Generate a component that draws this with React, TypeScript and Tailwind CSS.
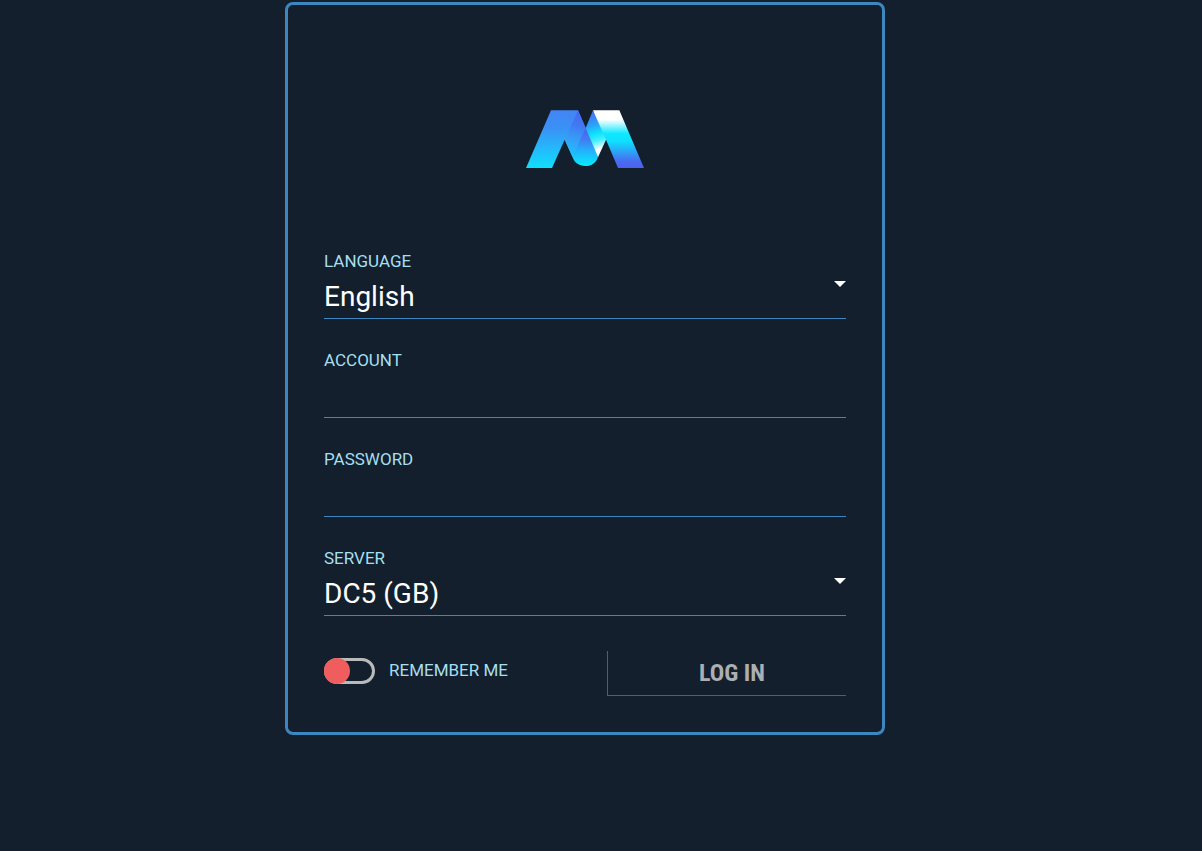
import { useState } from "react";
import type { ReactNode } from "react";

const languages = ["English", "Deutsch", "Español", "Français"];
const servers = ["DC5 (GB)", "DC1 (US)", "DC2 (DE)"];

export default function App() {
  const [language, setLanguage] = useState(languages[0]);
  const [account, setAccount] = useState("");
  const [password, setPassword] = useState("");
  const [server, setServer] = useState(servers[0]);
  const [remember, setRemember] = useState(false);

  return (
    <div className="min-h-screen bg-[#131f2c] pt-0.5 pr-8 font-['Roboto',sans-serif]">
      <form
        onSubmit={(e) => e.preventDefault()}
        className="mx-auto w-full max-w-[600px] rounded-lg border-3 border-[#3c87c0] p-9"
      >
        <div className="mb-3.5 flex h-49 items-center justify-center">
          <Logo />
        </div>

        <div className="space-y-[31px]">
          <Field id="language" label="Language">
            <SelectInput
              id="language"
              value={language}
              options={languages}
              onChange={setLanguage}
            />
          </Field>
          <Field id="account" label="Account">
            <input
              id="account"
              type="text"
              value={account}
              onChange={(e) => setAccount(e.target.value)}
              className="block h-12 w-full border-b border-[#3c87c0] text-[28px] text-white outline-none"
            />
          </Field>
          <Field id="password" label="Password">
            <input
              id="password"
              type="password"
              value={password}
              onChange={(e) => setPassword(e.target.value)}
              className="block h-12 w-full border-b border-[#3c87c0] text-[28px] text-white outline-none"
            />
          </Field>
          <Field id="server" label="Server">
            <SelectInput
              id="server"
              value={server}
              options={servers}
              onChange={setServer}
            />
          </Field>
        </div>

        <div className="mt-[35px] flex items-start justify-between">
          <label
            htmlFor="remember"
            className="flex h-10 cursor-pointer items-center gap-3.5 text-[17px] text-[#a5dff0] uppercase select-none"
          >
            <Toggle id="remember" checked={remember} onChange={setRemember} />
            Remember me
          </label>
          <button
            type="submit"
            className="h-[45px] w-[239px] border-b border-l border-[#2f6894] pl-2.5 font-['Roboto_Condensed','Roboto',sans-serif] text-2xl font-bold text-[#abafb4] uppercase"
          >
            Log in
          </button>
        </div>
      </form>
    </div>
  );
}

function Field({
  id,
  label,
  children,
}: {
  readonly id: string;
  readonly label: string;
  readonly children: ReactNode;
}) {
  return (
    <div>
      <label
        htmlFor={id}
        className="block text-[17px] leading-5 text-[#a5dff0] uppercase"
      >
        {label}
      </label>
      {children}
    </div>
  );
}

function SelectInput({
  id,
  value,
  options,
  onChange,
}: {
  readonly id: string;
  readonly value: string;
  readonly options: string[];
  readonly onChange: (v: string) => void;
}) {
  return (
    <div className="relative">
      <select
        id={id}
        value={value}
        onChange={(e) => onChange(e.target.value)}
        className="block h-12 w-full cursor-pointer appearance-none border-b border-[#3c87c0] bg-[#131f2c] pt-1 text-[28px] text-white outline-none"
      >
        {options.map((option) => (
          <option key={option}>{option}</option>
        ))}
      </select>
      <svg
        viewBox="0 0 12 6"
        className="pointer-events-none absolute top-2.5 right-0 h-1.5 w-3 fill-white"
      >
        <path d="M0 0h12L6 6z" />
      </svg>
    </div>
  );
}

function Toggle({
  id,
  checked,
  onChange,
}: {
  readonly id: string;
  readonly checked: boolean;
  readonly onChange: (v: boolean) => void;
}) {
  return (
    <span className="relative block h-[26px] w-[51px] rounded-full border-3 border-[#bababa]">
      <input
        id={id}
        type="checkbox"
        checked={checked}
        onChange={(e) => onChange(e.target.checked)}
        className="peer sr-only"
      />
      <span className="absolute -top-[3px] -left-[3px] size-[26px] rounded-full bg-[#f05d5e] transition-transform peer-checked:translate-x-[25px] peer-checked:bg-[#5ec98a]" />
    </span>
  );
}

function Logo() {
  return (
    <svg viewBox="30 30 358 174" className="h-[58px] w-[120px]">
      <defs>
        <linearGradient id="leftLeg" x1="0" y1="0" x2="0" y2="1">
          <stop offset="0" stopColor="#4285f5" />
          <stop offset="0.3" stopColor="#3a90f6" />
          <stop offset="1" stopColor="#10dfff" />
        </linearGradient>
        <linearGradient
          id="leftFold"
          gradientUnits="userSpaceOnUse"
          x1="195"
          y1="38"
          x2="165"
          y2="168"
        >
          <stop offset="0" stopColor="#4a68ef" />
          <stop offset="0.3" stopColor="#4179f3" />
          <stop offset="0.6" stopColor="#369cf7" />
          <stop offset="1" stopColor="#1fc4fc" />
        </linearGradient>
        <linearGradient id="drop" x1="0" y1="0" x2="0" y2="1">
          <stop offset="0" stopColor="#4a5ff0" />
          <stop offset="0.3" stopColor="#447af3" />
          <stop offset="0.62" stopColor="#20b6fb" />
          <stop offset="1" stopColor="#08eafe" />
        </linearGradient>
        <linearGradient
          id="rightFold"
          gradientUnits="userSpaceOnUse"
          x1="222"
          y1="40"
          x2="258"
          y2="160"
        >
          <stop offset="0" stopColor="#4672f1" />
          <stop offset="0.3" stopColor="#2ca2f8" />
          <stop offset="0.52" stopColor="#0ce4fe" />
          <stop offset="0.68" stopColor="#4aeefe" />
          <stop offset="0.9" stopColor="#ffffff" />
        </linearGradient>
        <linearGradient id="rightLeg" x1="0" y1="0" x2="0" y2="1">
          <stop offset="0.16" stopColor="#ffffff" />
          <stop offset="0.4" stopColor="#10e8fe" />
          <stop offset="0.54" stopColor="#0ee0fe" />
          <stop offset="0.88" stopColor="#4a6bf1" />
          <stop offset="1" stopColor="#4a62ee" />
        </linearGradient>
      </defs>
      {/* The lower shapes run on under their neighbours so that no seam shows */}
      <path fill="url(#leftLeg)" d="M107 31h81l23 53-39 88-24-53-38 85H32z" />
      <path fill="url(#leftFold)" d="M188 31l23 53 4 20-34 76-9-8-24-53z" />
      <path fill="url(#rightLeg)" d="M233 31h79l74 173h-78l-36-85-8 4z" />
      <path fill="url(#rightFold)" d="M233 31l39 88-24 53-10 0-27-60v-28z" />
      <path fill="url(#drop)" d="M211 84l37 86c-4 17-19 28-38 28s-34-11-38-27z" />
    </svg>
  );
}
